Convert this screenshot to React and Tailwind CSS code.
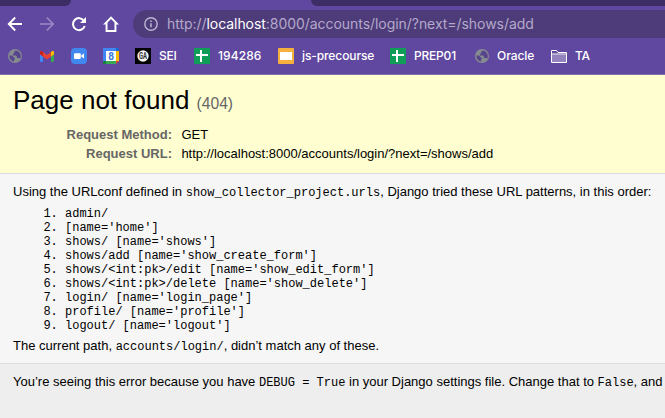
const Globe = () => (
  <svg width="14" height="14" viewBox="0 0 14 14" className="block">
    <circle cx="7" cy="7" r="7" fill="#868b90" />
    <path d="M7.6 1.6 6.2 2.8v1.5l-1.3.6v1.5h3l1 1.2v1.4h1.5l1.9.5A5.6 5.6 0 0 0 7.6 1.6ZM1.5 6.2l3 .6 1.2 1.6h1.1v1.6l-.8.9v1.6A5.5 5.5 0 0 1 1.5 6.2Z" fill="#57468a" />
  </svg>
);

const Gmail = () => (
  <svg width="14" height="11" viewBox="0 0 14 11" className="block">
    <path d="M0 2h3v9H1a1 1 0 0 1-1-1Z" fill="#4285f4" />
    <path d="M11 2h3v8a1 1 0 0 1-1 1h-2Z" fill="#34a853" />
    <path d="M0 1.5C0 .2 1.3-.3 2.3.4L7 4.1 11.7.4c1-.7 2.3-.2 2.3 1.1v1.7L7 8.5 0 3.2Z" fill="#ea4335" />
    <path d="M0 1.5C0 .2 1.3-.3 2.3.4L3 1v4.5L0 3.2Z" fill="#c5221f" />
    <path d="M14 1.5c0-1.3-1.3-1.8-2.3-1.1L11 1v4.5l3-2.3Z" fill="#fbbc04" />
  </svg>
);

const Zoom = () => (
  <svg width="16" height="16" viewBox="0 0 16 16" className="block">
    <rect width="16" height="16" rx="4" fill="#4087ef" />
    <rect x="3" y="5.3" width="6.8" height="5.6" rx="1" fill="#fff" />
    <path d="m10.4 7.2 2.6-1.8v5.2l-2.6-1.8Z" fill="#fff" />
  </svg>
);

const Calendar = () => (
  <svg width="16" height="16" viewBox="0 0 16 16" className="block">
    <path d="M0 1a1 1 0 0 1 1-1h12v3H3v10H0Z" fill="#4285f4" />
    <path d="M13 0h2a1 1 0 0 1 1 1v2h-3Z" fill="#1967d2" />
    <path d="M13 3h3v10h-3Z" fill="#fbbc04" />
    <path d="M3 13h10v3H3Z" fill="#34a853" />
    <path d="M0 13h3v3H1a1 1 0 0 1-1-1Z" fill="#188038" />
    <path d="M13 13h3l-3 3Z" fill="#ea4335" />
    <path d="M3 3h10v10H3Z" fill="#fff" />
    <text x="8" y="11.6" textAnchor="middle" fontSize="10" fontWeight="700" fill="#3a78dc" className="font-[Roboto,sans-serif]">8</text>
  </svg>
);

const Assembly = () => (
  <svg width="16" height="16" viewBox="0 0 16 16" className="block">
    <rect width="16" height="16" fill="#000" />
    <circle cx="8" cy="8" r="5.7" fill="#f4f4f4" />
    <text x="8" y="11" textAnchor="middle" fontSize="8.5" fontWeight="700" textLength="8" lengthAdjust="spacingAndGlyphs" fill="#333" className="font-[Roboto,sans-serif]">GA</text>
  </svg>
);

const Sheets = () => (
  <svg width="16" height="16" viewBox="0 0 16 16" className="block">
    <rect width="16" height="16" rx="1" fill="#0f9d58" />
    <path d="M2 6h12v2H8v6H6V8H2ZM6 2h2v4H6Z" fill="#fff" />
  </svg>
);

const Slides = () => (
  <svg width="16" height="16" viewBox="0 0 16 16" className="block">
    <rect width="16" height="16" rx="1" fill="#f6b03d" />
    <rect x="2" y="4" width="12" height="8" fill="#fff" />
  </svg>
);

const Folder = () => (
  <svg width="16" height="13" viewBox="0 0 16 13" className="block">
    <path d="M.5.5h5l1.5 2h8.5v10H.5Z" fill="#604a9e" stroke="#fff" />
    <path d="M1 4.5h14V12H1Z" fill="#9482bf" />
    <path d="M1 4h14" stroke="#fff" />
  </svg>
);

const bookmarks = [
  { icon: <Globe />, pad: "w-[32px]" },
  { icon: <Gmail />, pad: "w-[31px]" },
  { icon: <Zoom />, pad: "w-[32px]" },
  { icon: <Calendar />, pad: "w-[32px]" },
  { icon: <Assembly />, label: "SEI", pad: "w-[59px]", track: "tracking-[-0.2px]" },
  { icon: <Sheets />, label: "194286", pad: "w-[84px]", track: "tracking-[0.1px]" },
  { icon: <Slides />, label: "js-precourse", pad: "w-[112px]", track: "tracking-[-0.1px]" },
  { icon: <Sheets />, label: "PREP01", pad: "w-[85px]", track: "tracking-[-0.2px]" },
  { icon: <Globe />, label: "Oracle", pad: "w-[76px]", track: "tracking-[-0.05px]" },
  { icon: <Folder />, label: "TA", pad: "w-[60px]", track: "tracking-[-0.2px]" },
];

const patterns = [
  "admin/",
  "[name='home']",
  "shows/ [name='shows']",
  "shows/add [name='show_create_form']",
  "shows/<int:pk>/edit [name='show_edit_form']",
  "shows/<int:pk>/delete [name='show_delete']",
  "login/ [name='login_page']",
  "profile/ [name='profile']",
  "logout/ [name='logout']",
];

const Code = ({ children }) => (
  <code className="font-['Liberation_Mono',monospace] text-[12px] tracking-normal">{children}</code>
);

function Browser() {
  return (
    <header className="h-[75px] border-b border-[#816db2] bg-[#6048a0] font-[Inter,sans-serif]">
      <div className="flex h-[6px] justify-between">
        <div className="w-[71px] rounded-br-[7px] bg-[#3c2d64]" />
        <div className="w-[354px] rounded-bl-[7px] bg-[#3c2d64]" />
      </div>
      <div className="mt-1 flex h-7 items-center">
        <svg width="133" height="28" viewBox="0 0 133 28" fill="none" className="block shrink-0">
          <path d="M22 14H9.5M15.2 7.5 8.8 14l6.4 6.5" stroke="#fff" strokeWidth="1.9" />
          <path d="M40 14h12.5M46.8 7.5l6.4 6.5-6.4 6.5" stroke="#9a88c4" strokeWidth="1.7" />
          <path d="M84 10.8A6 6 0 1 0 84.7 16" stroke="#fff" strokeWidth="2" />
          <path d="M86 7v6h-6Z" fill="#fff" />
          <path fillRule="evenodd" d="M111 6.2 119 14.5H116.4V22H105.6V14.5H103ZM111 9 107.5 12.6V20H114.5V12.6Z" fill="#fff" />
        </svg>
        <div className="flex h-7 flex-1 items-center rounded-l-full bg-[#4d3c79] pl-[11px]">
          <svg width="14" height="14" viewBox="0 0 14 14" fill="none" className="block">
            <circle cx="7" cy="7" r="6.2" stroke="#beb5d1" strokeWidth="1.4" />
            <path d="M7 6.2v4M7 3.5V5" stroke="#beb5d1" strokeWidth="1.5" />
          </svg>
          <div className="ml-[9px] whitespace-nowrap text-[14px] leading-7 tracking-[-0.05px] text-[#b4a9ca]">
            http://<span className="text-white">localhost</span>:8000/accounts/login/?next=/shows/add
          </div>
        </div>
      </div>
      <div className="flex h-9 items-center pl-2">
        {bookmarks.map((b, i) => (
          <div key={i} className={`flex shrink-0 items-center whitespace-nowrap text-[12px] font-medium text-white ${b.pad}`}>
            {b.icon}
            {b.label && <span className={`ml-2 ${b.track}`}>{b.label}</span>}
          </div>
        ))}
      </div>
    </header>
  );
}

export default function App() {
  return (
    <div className="h-[418px] w-full overflow-hidden bg-[#eeeeee] font-['Liberation_Sans',Arial,sans-serif] text-[13px] text-black">
      <Browser />
      <section className="h-[99px] border-b border-[#dddddd] bg-[#fffed0] pl-[13px] pt-[10px]">
        <h1 className="h-[30px] whitespace-nowrap text-[26px] leading-[30px]">
          Page not found <span className="text-[15.6px] text-[#666666]">(404)</span>
        </h1>
        <dl className="mt-[10px] grid grid-cols-[159px_1fr] gap-x-[9.4px] leading-[19px]">
          <dt className="text-right font-bold text-[#666666]">Request Method:</dt>
          <dd>GET</dd>
          <dt className="text-right font-bold text-[#666666]">Request URL:</dt>
          <dd>http://localhost:8000/accounts/login/?next=/shows/add</dd>
        </dl>
      </section>
      <main className="h-[190px] border-b border-[#dddddd] bg-[#f6f6f6] pl-[13px] pt-[10px]">
        <p className="h-4 whitespace-nowrap leading-4">
          Using the URLconf defined in <Code>show_collector_project.urls</Code>, Django tried these URL patterns, in this order:
        </p>
        <ol className="mt-[7px] pl-[30.4px] font-['Liberation_Mono',monospace] text-[12px] leading-[14px]">
          {patterns.map((p, i) => (
            <li key={p} className="flex whitespace-pre">
              <span className="w-[21.6px]">{i + 1}.</span>
              <span>{p}</span>
            </li>
          ))}
        </ol>
        <p className="mt-[5px] whitespace-nowrap leading-4">
          The current path, <Code>accounts/login/</Code>, didn’t match any of these.
        </p>
      </main>
      <footer className="pl-[13px] pt-[10px]">
        <p className="whitespace-nowrap leading-4">
          You’re seeing this error because you have <Code>DEBUG = True</Code> in your Django settings file. Change that to <Code>False</Code>, and
        </p>
      </footer>
    </div>
  );
}
